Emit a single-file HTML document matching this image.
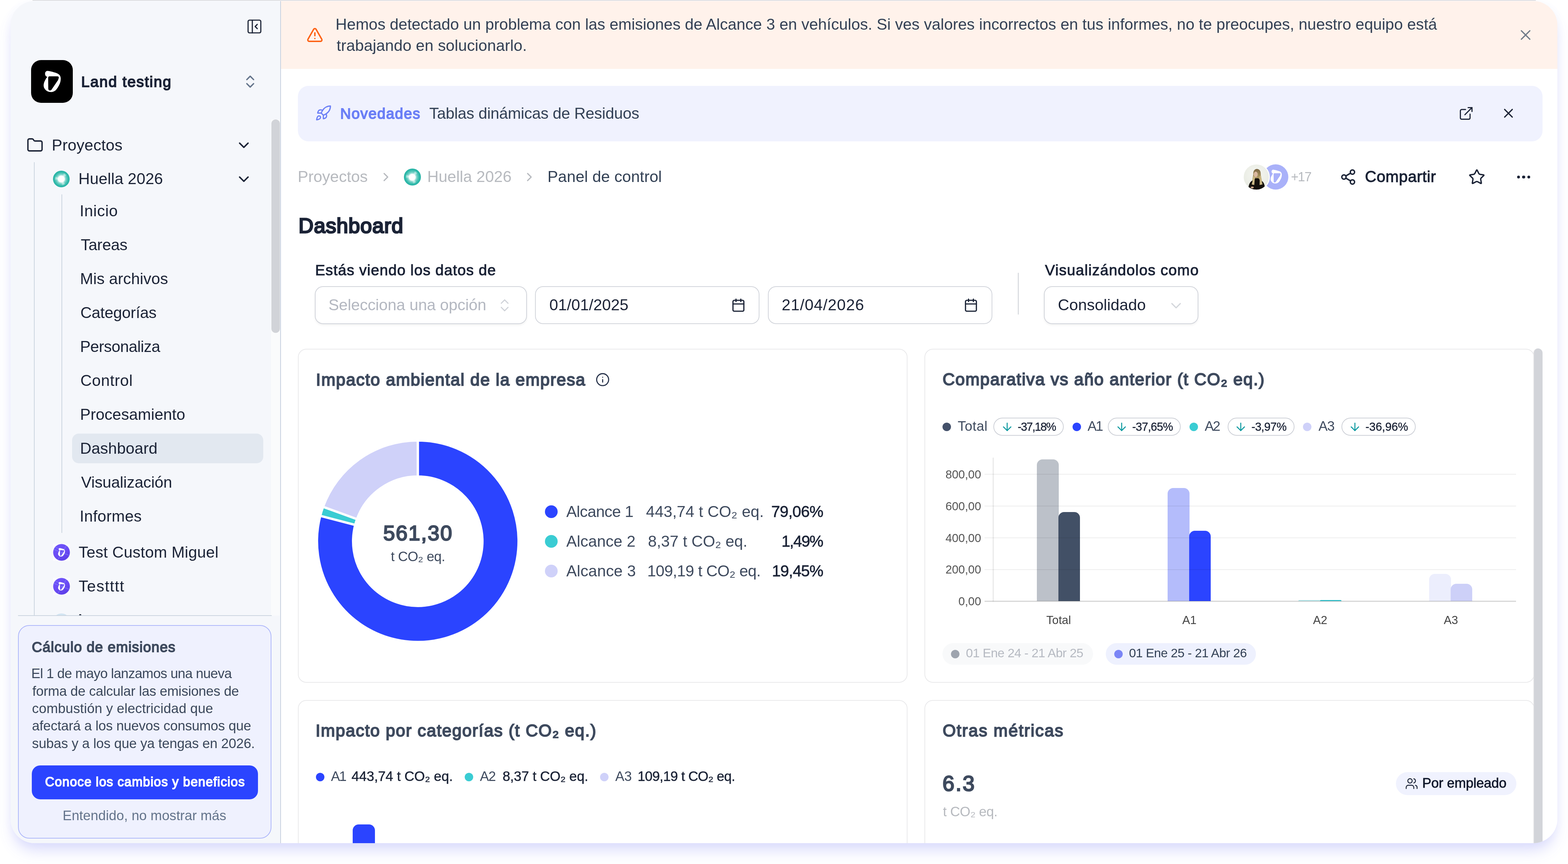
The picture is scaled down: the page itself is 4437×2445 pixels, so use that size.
<!DOCTYPE html>
<html lang="es"><head><meta charset="utf-8"><title>Dashboard</title><style>
html,body{margin:0;padding:0;background:#fff}
body{width:4437px;height:2445px;position:relative;overflow:hidden;font-family:"Liberation Sans",Arial,sans-serif}
.frame{position:absolute;left:30px;top:2.5px;width:4377px;height:2383px;border-radius:68px;overflow:hidden;background:#fff;box-shadow:0 28px 42px -8px rgba(99,102,241,0.23), 0 2px 26px rgba(99,102,241,0.035)}
.in{position:absolute;left:-30px;top:-2.5px;width:4437px;height:2445px;will-change:transform}
.b{position:absolute;box-sizing:border-box}
.i{position:absolute;display:block;overflow:visible}
.t{position:absolute;white-space:nowrap;line-height:1}
</style></head>
<body>
<div style="position:absolute;left:92px;top:0;width:4254px;height:2px;background:#dcdddd"></div>
<div class="frame"><div class="in">
<div class="b" style="left:30px;top:2px;width:765.2px;height:2384px;background:#f5f7fb;border-right:2.8px solid #c4cfde"></div>
<div class="b" style="left:767px;top:338.4px;width:25.4px;height:1403.5px;background:#fafbfc"></div>
<svg class="i" style="left:696px;top:51px" width="48" height="48" viewBox="0 0 24 24" fill="none" stroke="#1b2336" stroke-width="1.6" stroke-linecap="round" stroke-linejoin="round" ><rect width="18" height="18" x="3" y="3" rx="2"/><path d="M9 3v18"/><path d="m16 15-3-3 3-3"/></svg>
<div class="b" style="left:88px;top:170px;width:118px;height:121px;background:#000;border-radius:28px"></div>
<svg class="i" style="left:88px;top:170px" width="118" height="121" viewBox="0 0 118 121"><path d="M45.9 30.6 C50 30.6 64 34 72.5 37 C80 40 84.5 45 83.8 54 C83.5 62 81 68 78.4 72.5 C75 79 72 83 69.5 85.5 C65 89 61 90.4 56.7 90.4 C50 90.4 44 88 40.9 84.3 C37 80 35 76 35.5 70 C36 65 37.5 61 39.5 57.5 C41 54 43.5 50.5 45.8 47.5 C43 46.5 40.5 45 40 42 C39 38 39.5 35 41.5 33 C42.8 31.5 44 30.6 45.9 30.6 Z M51.8 46 L74.5 46 C77.5 46 79 48 78 51 C77.5 53 77 55 76 57 L59 82 C57.5 84.5 56 86 53.5 86 C50.5 86 48.8 84 48.6 81 L48.3 51 C48.3 48 49.5 46 51.8 46 Z" fill="#fff" fill-rule="evenodd"/></svg>
<svg class="i" style="left:685px;top:208px" width="46" height="46" viewBox="0 0 24 24" fill="none" stroke="#64748b" stroke-width="2" stroke-linecap="round" stroke-linejoin="round" ><path d="m7 15 5 5 5-5"/><path d="m7 9 5-5 5 5"/></svg>
<div class="b" style="left:768.1px;top:338.4px;width:23.8px;height:604px;background:#d1d3d8;border-radius:12px"></div>
<svg class="i" style="left:75px;top:387px" width="48" height="48" viewBox="0 0 24 24" fill="none" stroke="#1b2336" stroke-width="1.9" stroke-linecap="round" stroke-linejoin="round" ><path d="M20 20a2 2 0 0 0 2-2V8a2 2 0 0 0-2-2h-7.9a2 2 0 0 1-1.69-.9L9.6 3.9A2 2 0 0 0 7.93 3H4a2 2 0 0 0-2 2v13a2 2 0 0 0 2 2Z"/></svg>
<svg class="i" style="left:666px;top:387px" width="48" height="48" viewBox="0 0 24 24" fill="none" stroke="#1b2336" stroke-width="2" stroke-linecap="round" stroke-linejoin="round" ><path d="m6 9 6 6 6-6"/></svg>
<div class="b" style="left:96px;top:459px;width:2px;height:1284px;background:#c9d3de"></div>
<div class="b" style="left:150.3px;top:483px;width:47.2px;height:47.2px;border-radius:50%;background:radial-gradient(circle,#6fd0c4 0,#3dbfb0 50%,#1fb0a2 74%,#25b4a6 100%)"><div style="position:absolute;left:6.1px;top:6.1px;width:34.9px;height:34.9px;border-radius:50%;background:conic-gradient(from 25deg,rgba(255,255,255,.55) 0 8%,rgba(255,255,255,.12) 8% 33%,rgba(255,255,255,.55) 33% 41%,rgba(255,255,255,.12) 41% 66%,rgba(255,255,255,.55) 66% 74%,rgba(255,255,255,.12) 74% 100%);filter:blur(1.2px)"></div><div style="position:absolute;left:14.2px;top:14.2px;width:18.9px;height:18.9px;border-radius:50%;background:#fff;box-shadow:0 0 5px 2px rgba(255,255,255,.85)"></div></div>
<svg class="i" style="left:666px;top:483px" width="48" height="48" viewBox="0 0 24 24" fill="none" stroke="#1b2336" stroke-width="2" stroke-linecap="round" stroke-linejoin="round" ><path d="m6 9 6 6 6-6"/></svg>
<div class="b" style="left:174px;top:550px;width:2px;height:958px;background:#c9d3de"></div>
<div class="b" style="left:204px;top:1227px;width:540.5px;height:83.5px;background:#e2e8f0;border-radius:19px"></div>
<svg class="i" style="left:150px;top:1538.6px" width="48.2" height="48.2" viewBox="0 0 48 48"><defs><linearGradient id="pg1538" x1="0.2" y1="0" x2="0.8" y2="1"><stop offset="0" stop-color="#6f55fb"/><stop offset=".55" stop-color="#6a4af3"/><stop offset="1" stop-color="#5a3de6"/></linearGradient><clipPath id="pg1538c"><circle cx="24" cy="24" r="23.6"/></clipPath></defs><rect width="48" height="48" fill="#fbfbfe"/><circle cx="24" cy="24" r="23.6" fill="url(#pg1538)"/><g clip-path="url(#pg1538c)" stroke="#9fd0ff" stroke-opacity=".45" stroke-width="1.1" fill="none"><path d="M-2 14 L50 34"/><path d="M10 50 L42 -2"/><path d="M4 8 L30 20"/></g><g transform="translate(0.2,-0.4) scale(0.40)"><path d="M45.9 30.6 C50 30.6 64 34 72.5 37 C80 40 84.5 45 83.8 54 C83.5 62 81 68 78.4 72.5 C75 79 72 83 69.5 85.5 C65 89 61 90.4 56.7 90.4 C50 90.4 44 88 40.9 84.3 C37 80 35 76 35.5 70 C36 65 37.5 61 39.5 57.5 C41 54 43.5 50.5 45.8 47.5 C43 46.5 40.5 45 40 42 C39 38 39.5 35 41.5 33 C42.8 31.5 44 30.6 45.9 30.6 Z M51.8 46 L74.5 46 C77.5 46 79 48 78 51 C77.5 53 77 55 76 57 L59 82 C57.5 84.5 56 86 53.5 86 C50.5 86 48.8 84 48.6 81 L48.3 51 C48.3 48 49.5 46 51.8 46 Z" fill="#fff" fill-rule="evenodd"/></g></svg>
<svg class="i" style="left:150px;top:1634.8px" width="48.2" height="48.2" viewBox="0 0 48 48"><defs><linearGradient id="pg1634" x1="0.2" y1="0" x2="0.8" y2="1"><stop offset="0" stop-color="#6f55fb"/><stop offset=".55" stop-color="#6a4af3"/><stop offset="1" stop-color="#5a3de6"/></linearGradient><clipPath id="pg1634c"><circle cx="24" cy="24" r="23.6"/></clipPath></defs><rect width="48" height="48" fill="#fbfbfe"/><circle cx="24" cy="24" r="23.6" fill="url(#pg1634)"/><g clip-path="url(#pg1634c)" stroke="#9fd0ff" stroke-opacity=".45" stroke-width="1.1" fill="none"><path d="M-2 14 L50 34"/><path d="M10 50 L42 -2"/><path d="M4 8 L30 20"/></g><g transform="translate(0.2,-0.4) scale(0.40)"><path d="M45.9 30.6 C50 30.6 64 34 72.5 37 C80 40 84.5 45 83.8 54 C83.5 62 81 68 78.4 72.5 C75 79 72 83 69.5 85.5 C65 89 61 90.4 56.7 90.4 C50 90.4 44 88 40.9 84.3 C37 80 35 76 35.5 70 C36 65 37.5 61 39.5 57.5 C41 54 43.5 50.5 45.8 47.5 C43 46.5 40.5 45 40 42 C39 38 39.5 35 41.5 33 C42.8 31.5 44 30.6 45.9 30.6 Z M51.8 46 L74.5 46 C77.5 46 79 48 78 51 C77.5 53 77 55 76 57 L59 82 C57.5 84.5 56 86 53.5 86 C50.5 86 48.8 84 48.6 81 L48.3 51 C48.3 48 49.5 46 51.8 46 Z" fill="#fff" fill-rule="evenodd"/></g></svg>
<div class="b" style="left:150px;top:1735.6px;width:48px;height:6.6px;overflow:hidden"><div style="width:48px;height:48px;border-radius:50%;background:radial-gradient(circle at 50% 40%,#e4f0f8,#bcd6ea)"></div></div>
<div class="b" style="left:223.6px;top:1737.6px;width:6px;height:4.6px;background:#1b2336;border-radius:50% 50% 0 0"></div>
<div class="b" style="left:51px;top:1741px;width:718px;height:2px;background:#c9d3de"></div>
<div class="b" style="left:51px;top:1769px;width:717px;height:604px;background:#eff1fe;border:2px solid #aab4fa;border-radius:32px"></div>
<div class="b" style="left:89.6px;top:2166px;width:640px;height:96px;background:#2b44ff;border-radius:24px"></div>
<div class="b" style="left:795.2px;top:2px;width:3613px;height:192.8px;background:#fff2eb"></div>
<svg class="i" style="left:867px;top:75px" width="48" height="48" viewBox="0 0 24 24" fill="none" stroke="#fd6215" stroke-width="2" stroke-linecap="round" stroke-linejoin="round" ><path d="m21.73 18-8-14a2 2 0 0 0-3.48 0l-8 14A2 2 0 0 0 4 21h16a2 2 0 0 0 1.73-3"/><path d="M12 9v4"/><path d="M12 17h.01"/></svg>
<svg class="i" style="left:4292.8px;top:75.1px" width="48" height="48" viewBox="0 0 24 24" fill="none" stroke="#6f7a88" stroke-width="1.7" stroke-linecap="round" stroke-linejoin="round" ><path d="M18 6 6 18"/><path d="m6 6 12 12"/></svg>
<div class="b" style="left:843px;top:243px;width:3522px;height:157px;background:#f0f2fe;border-radius:30px"></div>
<svg class="i" style="left:891px;top:296px" width="48" height="48" viewBox="0 0 24 24" fill="none" stroke="#6b7ff6" stroke-width="1.7" stroke-linecap="round" stroke-linejoin="round" ><path d="M4.5 16.5c-1.5 1.26-2 5-2 5s3.74-.5 5-2c.71-.84.7-2.13-.09-2.91a2.18 2.18 0 0 0-2.91-.09z"/><path d="m12 15-3-3a22 22 0 0 1 2-3.95A12.88 12.88 0 0 1 22 2c0 2.72-.78 7.5-6 11a22.35 22.35 0 0 1-4 2z"/><path d="M9 12H4s.55-3.03 2-4c1.62-1.08 5 0 5 0"/><path d="M12 15v5s3.03-.55 4-2c1.08-1.62 0-5 0-5"/></svg>
<svg class="i" style="left:4127.3px;top:298.6px" width="43.8" height="43.8" viewBox="0 0 24 24" fill="none" stroke="#1b2336" stroke-width="1.75" stroke-linecap="round" stroke-linejoin="round" ><path d="M15 3h6v6"/><path d="M10 14 21 3"/><path d="M18 13v6a2 2 0 0 1-2 2H5a2 2 0 0 1-2-2V8a2 2 0 0 1 2-2h6"/></svg>
<svg class="i" style="left:4247.2px;top:299.4px" width="43" height="43" viewBox="0 0 24 24" fill="none" stroke="#1b2336" stroke-width="2" stroke-linecap="round" stroke-linejoin="round" ><path d="M18 6 6 18"/><path d="m6 6 12 12"/></svg>
<svg class="i" style="left:1071.9px;top:481.2px" width="40" height="40" viewBox="0 0 24 24" fill="none" stroke="#b7babf" stroke-width="2" stroke-linecap="round" stroke-linejoin="round" ><path d="m9 18 6-6-6-6"/></svg>
<div class="b" style="left:1143px;top:477.3px;width:47.7px;height:47.7px;border-radius:50%;background:radial-gradient(circle,#6fd0c4 0,#3dbfb0 50%,#1fb0a2 74%,#25b4a6 100%)"><div style="position:absolute;left:6.2px;top:6.2px;width:35.3px;height:35.3px;border-radius:50%;background:conic-gradient(from 25deg,rgba(255,255,255,.55) 0 8%,rgba(255,255,255,.12) 8% 33%,rgba(255,255,255,.55) 33% 41%,rgba(255,255,255,.12) 41% 66%,rgba(255,255,255,.55) 66% 74%,rgba(255,255,255,.12) 74% 100%);filter:blur(1.2px)"></div><div style="position:absolute;left:14.3px;top:14.3px;width:19.1px;height:19.1px;border-radius:50%;background:#fff;box-shadow:0 0 5px 2px rgba(255,255,255,.85)"></div></div>
<svg class="i" style="left:1478.4px;top:481.2px" width="40" height="40" viewBox="0 0 24 24" fill="none" stroke="#b7babf" stroke-width="2" stroke-linecap="round" stroke-linejoin="round" ><path d="m9 18 6-6-6-6"/></svg>
<svg class="i" style="left:3573.6px;top:465.2px" width="71.6" height="71.6" viewBox="0 0 71.6 71.6"><circle cx="35.8" cy="35.8" r="35.8" fill="#a9b1f9"/><g transform="translate(-1.7,-4.9) scale(0.655)"><path d="M45.9 30.6 C50 30.6 64 34 72.5 37 C80 40 84.5 45 83.8 54 C83.5 62 81 68 78.4 72.5 C75 79 72 83 69.5 85.5 C65 89 61 90.4 56.7 90.4 C50 90.4 44 88 40.9 84.3 C37 80 35 76 35.5 70 C36 65 37.5 61 39.5 57.5 C41 54 43.5 50.5 45.8 47.5 C43 46.5 40.5 45 40 42 C39 38 39.5 35 41.5 33 C42.8 31.5 44 30.6 45.9 30.6 Z M51.8 46 L74.5 46 C77.5 46 79 48 78 51 C77.5 53 77 55 76 57 L59 82 C57.5 84.5 56 86 53.5 86 C50.5 86 48.8 84 48.6 81 L48.3 51 C48.3 48 49.5 46 51.8 46 Z" fill="#fff" fill-rule="evenodd"/></g></svg>
<svg class="i" style="left:3514.8px;top:462.2px" width="80" height="80" viewBox="0 0 80 80"><defs><clipPath id="av"><circle cx="40" cy="39" r="35.6"/></clipPath><linearGradient id="hg" x1="0" y1="0" x2="0" y2="1"><stop offset="0" stop-color="#7a6644"/><stop offset=".45" stop-color="#a8935f"/><stop offset="1" stop-color="#d2c190"/></linearGradient><radialGradient id="bgp" cx=".5" cy=".4" r=".7"><stop offset="0" stop-color="#f6f7f2"/><stop offset="1" stop-color="#e6e9e0"/></radialGradient></defs><circle cx="40" cy="39" r="38.3" fill="#fff"/><circle cx="40" cy="39" r="35.6" fill="url(#bgp)"/><g clip-path="url(#av)"><path d="M31.5 31 C30.5 21 36 16 42 16 C49 16.5 53 22 52.6 32 L57.5 60 L49 62 L47 45 L36 45 L34 61 L26.5 59.5 Z" fill="url(#hg)"/><ellipse cx="38.4" cy="31.6" rx="5.6" ry="7.8" fill="#dab9a0"/><path d="M16.5 82 C17 61 22 50.5 32 47.8 L37.5 42.5 L46 42.5 L50.5 47.8 C60 50.5 64.8 58 65.5 82 Z" fill="#15110c"/><path d="M32 36 C30.5 46 28.5 54 27 60 L34.2 61.5 C35.2 52 35.4 45 36 40 Z" fill="#cdbb88"/><path d="M48.6 38 C49.8 46 49.6 54 49.2 61.5 L57.5 60 C55.8 50 53.8 42 52.6 34 Z" fill="#c9b682"/><ellipse cx="28.5" cy="68.5" rx="4.2" ry="2.4" fill="#d3ab8e"/></g></svg>
<svg class="i" style="left:3791px;top:477px" width="48" height="48" viewBox="0 0 24 24" fill="none" stroke="#1b2336" stroke-width="2" stroke-linecap="round" stroke-linejoin="round" ><circle cx="18" cy="5" r="3"/><circle cx="6" cy="12" r="3"/><circle cx="18" cy="19" r="3"/><path d="M8.59 13.51 15.42 17.49"/><path d="M15.41 6.51 8.59 10.49"/></svg>
<svg class="i" style="left:4155px;top:477px" width="48" height="48" viewBox="0 0 24 24" fill="none" stroke="#1b2336" stroke-width="1.9" stroke-linecap="round" stroke-linejoin="round" ><path d="M11.525 2.295a.53.53 0 0 1 .95 0l2.31 4.679a2.123 2.123 0 0 0 1.595 1.16l5.166.756a.53.53 0 0 1 .294.904l-3.736 3.638a2.123 2.123 0 0 0-.611 1.878l.882 5.14a.53.53 0 0 1-.771.56l-4.618-2.428a2.122 2.122 0 0 0-1.973 0L6.396 21.01a.53.53 0 0 1-.77-.56l.881-5.139a2.122 2.122 0 0 0-.611-1.879L2.16 9.795a.53.53 0 0 1 .294-.906l5.165-.755a2.122 2.122 0 0 0 1.597-1.16z"/></svg>
<div class="b" style="left:4292.5px;top:496.5px;width:8.5px;height:8.5px;background:#1b2336;border-radius:50%"></div>
<div class="b" style="left:4307.0px;top:496.5px;width:8.5px;height:8.5px;background:#1b2336;border-radius:50%"></div>
<div class="b" style="left:4321.5px;top:496.5px;width:8.5px;height:8.5px;background:#1b2336;border-radius:50%"></div>
<div class="b" style="left:891px;top:810.4px;width:599.6px;height:106.8px;background:#fff;border:2.5px solid #cfd2d9;border-radius:23px;box-shadow:0 3px 6px rgba(0,0,0,0.06)"></div>
<svg class="i" style="left:1405px;top:841.2px" width="46" height="46" viewBox="0 0 24 24" fill="none" stroke="#cfd2d8" stroke-width="1.6" stroke-linecap="round" stroke-linejoin="round" ><path d="m7 15 5 5 5-5"/><path d="m7 9 5-5 5 5"/></svg>
<div class="b" style="left:1514px;top:810.4px;width:635px;height:106.8px;background:#fff;border:2.5px solid #cfd2d9;border-radius:23px;"></div>
<svg class="i" style="left:2069px;top:843.3px" width="41" height="41" viewBox="0 0 24 24" fill="none" stroke="#1b2336" stroke-width="2" stroke-linecap="round" stroke-linejoin="round" ><path d="M8 2v4"/><path d="M16 2v4"/><rect width="18" height="18" x="3" y="4" rx="2"/><path d="M3 10h18"/></svg>
<div class="b" style="left:2173px;top:810.4px;width:635px;height:106.8px;background:#fff;border:2.5px solid #cfd2d9;border-radius:23px;"></div>
<svg class="i" style="left:2726.6px;top:843.3px" width="41" height="41" viewBox="0 0 24 24" fill="none" stroke="#1b2336" stroke-width="2" stroke-linecap="round" stroke-linejoin="round" ><path d="M8 2v4"/><path d="M16 2v4"/><rect width="18" height="18" x="3" y="4" rx="2"/><path d="M3 10h18"/></svg>
<div class="b" style="left:2880px;top:772px;width:3px;height:118px;background:#d9dbe0"></div>
<div class="b" style="left:2954px;top:810.4px;width:437px;height:106.8px;background:#fff;border:2.5px solid #cfd2d9;border-radius:23px;box-shadow:0 3px 6px rgba(0,0,0,0.06)"></div>
<svg class="i" style="left:3304px;top:840.5px" width="48" height="48" viewBox="0 0 24 24" fill="none" stroke="#d3d6db" stroke-width="1.6" stroke-linecap="round" stroke-linejoin="round" ><path d="m6 9 6 6 6-6"/></svg>
<div class="b" style="left:843px;top:987px;width:1725px;height:945px;background:#fff;border:2.5px solid #e8e8ea;border-radius:24px;"></div>
<div class="b" style="left:2616px;top:987px;width:1726px;height:945px;background:#fff;border:2.5px solid #e8e8ea;border-radius:24px;"></div>
<div class="b" style="left:843px;top:1981px;width:1725px;height:500px;background:#fff;border:2.5px solid #e8e8ea;border-radius:24px;"></div>
<div class="b" style="left:2616px;top:1981px;width:1726px;height:500px;background:#fff;border:2.5px solid #e8e8ea;border-radius:24px;"></div>
<svg class="i" style="left:1684.6px;top:1053.5px" width="40.7" height="40.7" viewBox="0 0 24 24" fill="none" stroke="#27324a" stroke-width="1.8" stroke-linecap="round" stroke-linejoin="round" ><circle cx="12" cy="12" r="10"/><path d="M12 16v-4"/><path d="M12 8h.01"/></svg>
<svg class="i" style="left:0;top:0" width="4437" height="2445" viewBox="0 0 4437 2445"><path d="M1182.20 1246.40 A285.2 285.2 0 1 1 906.23 1459.63 L1005.12 1485.42 A183 183 0 1 0 1182.20 1348.60 Z" fill="#2b44ff" stroke="#fff" stroke-width="6.5" stroke-linejoin="miter"/><path d="M906.23 1459.63 A285.2 285.2 0 0 1 914.17 1434.15 L1010.21 1469.07 A183 183 0 0 0 1005.12 1485.42 Z" fill="#3accd3" stroke="#fff" stroke-width="6.5" stroke-linejoin="miter"/><path d="M914.17 1434.15 A285.2 285.2 0 0 1 1182.20 1246.40 L1182.20 1348.60 A183 183 0 0 0 1010.21 1469.07 Z" fill="#cfd1f9" stroke="#fff" stroke-width="6.5" stroke-linejoin="miter"/></svg>
<div class="b" style="left:1542px;top:1429.9px;width:36px;height:36px;background:#2b44ff;border-radius:50%"></div>
<div class="b" style="left:1542px;top:1513.9px;width:36px;height:36px;background:#3accd3;border-radius:50%"></div>
<div class="b" style="left:1542px;top:1597.9px;width:36px;height:36px;background:#cfd1f9;border-radius:50%"></div>
<div class="b" style="left:2667px;top:1195.5px;width:24px;height:24px;background:#44516a;border-radius:50%"></div>
<div class="b" style="left:2811px;top:1182px;width:199px;height:51px;border:2.5px solid #cbced5;border-radius:26px;background:#fff"></div>
<svg class="i" style="left:2831.5px;top:1190px" width="36" height="36" viewBox="0 0 24 24" fill="none" stroke="#0e9aa0" stroke-width="1.9" stroke-linecap="round" stroke-linejoin="round" ><path d="M12 5v14"/><path d="m19 12-7 7-7-7"/></svg>
<div class="b" style="left:3034.5px;top:1195.5px;width:24px;height:24px;background:#2b44ff;border-radius:50%"></div>
<div class="b" style="left:3135px;top:1182px;width:206px;height:51px;border:2.5px solid #cbced5;border-radius:26px;background:#fff"></div>
<svg class="i" style="left:3155.5px;top:1190px" width="36" height="36" viewBox="0 0 24 24" fill="none" stroke="#0e9aa0" stroke-width="1.9" stroke-linecap="round" stroke-linejoin="round" ><path d="M12 5v14"/><path d="m19 12-7 7-7-7"/></svg>
<div class="b" style="left:3365.5px;top:1195.5px;width:24px;height:24px;background:#3accd3;border-radius:50%"></div>
<div class="b" style="left:3473.5px;top:1182px;width:189px;height:51px;border:2.5px solid #cbced5;border-radius:26px;background:#fff"></div>
<svg class="i" style="left:3493px;top:1190px" width="36" height="36" viewBox="0 0 24 24" fill="none" stroke="#0e9aa0" stroke-width="1.9" stroke-linecap="round" stroke-linejoin="round" ><path d="M12 5v14"/><path d="m19 12-7 7-7-7"/></svg>
<div class="b" style="left:3687px;top:1195.5px;width:24px;height:24px;background:#cfd1f9;border-radius:50%"></div>
<div class="b" style="left:3795.5px;top:1182px;width:210px;height:51px;border:2.5px solid #cbced5;border-radius:26px;background:#fff"></div>
<svg class="i" style="left:3815.5px;top:1190px" width="36" height="36" viewBox="0 0 24 24" fill="none" stroke="#0e9aa0" stroke-width="1.9" stroke-linecap="round" stroke-linejoin="round" ><path d="M12 5v14"/><path d="m19 12-7 7-7-7"/></svg>
<div class="b" style="left:2934px;top:1299.645px;width:61.5px;height:401.855px;background:#bcc1c9;border-radius:16px 16px 0 0"></div>
<div class="b" style="left:2994.5px;top:1449.162px;width:61.5px;height:252.338px;background:#425066;border-radius:16px 16px 0 0"></div>
<div class="b" style="left:3304px;top:1380.914px;width:61.5px;height:320.586px;background:#b4bcfb;border-radius:16px 16px 0 0"></div>
<div class="b" style="left:3364.5px;top:1501.695px;width:61.5px;height:199.805px;background:#2b44ff;border-radius:16px 16px 0 0"></div>
<div class="b" style="left:3674px;top:1697.5488px;width:61.5px;height:3.9512000000000005px;background:#b5e8ec;border-radius:3.9512000000000005px 3.9512000000000005px 0 0"></div>
<div class="b" style="left:3734.5px;top:1697.7284px;width:61.5px;height:3.7716000000000003px;background:#2ec4cf;border-radius:3.7716000000000003px 3.7716000000000003px 0 0"></div>
<div class="b" style="left:4044px;top:1623.5985px;width:61.5px;height:77.9015px;background:#eceefd;border-radius:16px 16px 0 0"></div>
<div class="b" style="left:4104.5px;top:1652.11px;width:61.5px;height:49.39px;background:#cdd0f8;border-radius:16px 16px 0 0"></div>
<div class="b" style="left:2786px;top:1700.3px;width:1504px;height:2.4px;background:rgba(0,0,0,0.17)"></div>
<div class="b" style="left:2786px;top:1610.5px;width:1504px;height:2.4px;background:rgba(0,0,0,0.075)"></div>
<div class="b" style="left:2786px;top:1520.7px;width:1504px;height:2.4px;background:rgba(0,0,0,0.075)"></div>
<div class="b" style="left:2786px;top:1430.8999999999999px;width:1504px;height:2.4px;background:rgba(0,0,0,0.075)"></div>
<div class="b" style="left:2786px;top:1341.1px;width:1504px;height:2.4px;background:rgba(0,0,0,0.075)"></div>
<div class="b" style="left:2809.3px;top:1295px;width:2.4px;height:407px;background:rgba(0,0,0,0.09)"></div>
<div class="b" style="left:2667px;top:1820px;width:426px;height:61px;background:#f8f9fa;border-radius:31px"></div>
<div class="b" style="left:2691px;top:1838.5px;width:24px;height:24px;background:#9ea4ae;border-radius:50%"></div>
<div class="b" style="left:3129px;top:1820px;width:425px;height:61px;background:#eef1fe;border-radius:31px"></div>
<div class="b" style="left:3153px;top:1838.5px;width:24px;height:24px;background:#7a85f6;border-radius:50%"></div>
<div class="b" style="left:894px;top:2187.0px;width:24px;height:24px;background:#2b44ff;border-radius:50%"></div>
<div class="b" style="left:1315px;top:2187.0px;width:24px;height:24px;background:#3accd3;border-radius:50%"></div>
<div class="b" style="left:1698px;top:2187.0px;width:24px;height:24px;background:#cfd1f9;border-radius:50%"></div>
<div class="b" style="left:998px;top:2333px;width:62.5px;height:120px;background:#2b44ff;border-radius:17px 17px 0 0"></div>
<div class="b" style="left:3949.5px;top:2184.5px;width:341px;height:65.5px;background:#f0f2fe;border-radius:33px"></div>
<svg class="i" style="left:3976px;top:2199px" width="37" height="37" viewBox="0 0 24 24" fill="none" stroke="#1b2336" stroke-width="1.7" stroke-linecap="round" stroke-linejoin="round" ><path d="M16 21v-2a4 4 0 0 0-4-4H6a4 4 0 0 0-4 4v2"/><circle cx="9" cy="7" r="4"/><path d="M22 21v-2a4 4 0 0 0-3-3.87"/><path d="M16 3.13a4 4 0 0 1 0 7.75"/></svg>
<div class="b" style="left:4338.6px;top:986px;width:26.4px;height:1420px;background:#d2d4d9;border-radius:13px 13px 0 0;border-left:2.5px solid #e6e6e8"></div>
<span class="t" style="left:229.8px;top:210.6px;font-size:42.3px;color:#1b2336;letter-spacing:2.17px;-webkit-text-stroke:2.16px #1b2336;">Land testing</span>
<span class="t" style="left:146.4px;top:388.5px;font-size:44.6px;color:#1b2336;letter-spacing:0.25px;">Proyectos</span>
<span class="t" style="left:222.0px;top:483.9px;font-size:44.6px;color:#1b2336;letter-spacing:0.11px;">Huella 2026</span>
<span class="t" style="left:225.4px;top:574.5px;font-size:44.6px;color:#1b2336;letter-spacing:0.72px;">Inicio</span>
<span class="t" style="left:228.4px;top:670.5px;font-size:44.6px;color:#1b2336;letter-spacing:-0.31px;">Tareas</span>
<span class="t" style="left:226.4px;top:766.5px;font-size:44.6px;color:#1b2336;letter-spacing:0.12px;">Mis archivos</span>
<span class="t" style="left:227.4px;top:862.5px;font-size:44.6px;color:#1b2336;letter-spacing:-0.27px;">Categorías</span>
<span class="t" style="left:226.4px;top:958.5px;font-size:44.6px;color:#1b2336;letter-spacing:-0.58px;">Personaliza</span>
<span class="t" style="left:227.4px;top:1054.5px;font-size:44.6px;color:#1b2336;letter-spacing:0.68px;">Control</span>
<span class="t" style="left:226.4px;top:1150.5px;font-size:44.6px;color:#1b2336;letter-spacing:0.01px;">Procesamiento</span>
<span class="t" style="left:226.4px;top:1246.5px;font-size:44.6px;color:#1b2336;letter-spacing:0.11px;">Dashboard</span>
<span class="t" style="left:229.4px;top:1342.5px;font-size:44.6px;color:#1b2336;letter-spacing:-0.16px;">Visualización</span>
<span class="t" style="left:225.4px;top:1438.5px;font-size:44.6px;color:#1b2336;letter-spacing:0.29px;">Informes</span>
<span class="t" style="left:222.4px;top:1540.7px;font-size:44.6px;color:#1b2336;letter-spacing:0.24px;">Test Custom Miguel</span>
<span class="t" style="left:222.4px;top:1636.5px;font-size:44.6px;color:#1b2336;letter-spacing:1.64px;">Testttt</span>
<span class="t" style="left:89.9px;top:1811.9px;font-size:40.3px;color:#3e4a5e;letter-spacing:1.21px;-webkit-text-stroke:2.06px #3e4a5e;">Cálculo de emisiones</span>
<span class="t" style="left:88.6px;top:1887.3px;font-size:38.6px;color:#3b485b;letter-spacing:-0.81px;">El 1 de mayo lanzamos una nueva</span>
<span class="t" style="left:91.6px;top:1936.6px;font-size:38.6px;color:#3b485b;letter-spacing:-0.28px;">forma de calcular las emisiones de</span>
<span class="t" style="left:90.6px;top:1986.0px;font-size:38.6px;color:#3b485b;letter-spacing:0.15px;">combustión y electricidad que</span>
<span class="t" style="left:90.6px;top:2035.3px;font-size:38.6px;color:#3b485b;letter-spacing:-0.25px;">afectará a los nuevos consumos que</span>
<span class="t" style="left:90.6px;top:2084.7px;font-size:38.6px;color:#3b485b;letter-spacing:-0.24px;">subas y a los que ya tengas en 2026.</span>
<span class="t" style="left:127.5px;top:2194.7px;font-size:36.2px;color:#fff;letter-spacing:1.26px;-webkit-text-stroke:1.85px #fff;">Conoce los cambios y beneficios</span>
<span class="t" style="left:177.2px;top:2289.2px;font-size:38.6px;color:#64748b;">Entendido, no mostrar más</span>
<span class="t" style="left:949.5px;top:46.6px;font-size:44.6px;color:#334155;letter-spacing:-0.01px;">Hemos detectado un problema con las emisiones de Alcance 3 en vehículos. Si ves valores incorrectos en tus informes, no te preocupes, nuestro equipo está</span>
<span class="t" style="left:952.5px;top:106.7px;font-size:44.6px;color:#334155;letter-spacing:0.11px;">trabajando en solucionarlo.</span>
<span class="t" style="left:962.8px;top:300.9px;font-size:41.8px;color:#6b7ff6;letter-spacing:1.79px;-webkit-text-stroke:2.13px #6b7ff6;">Novedades</span>
<span class="t" style="left:1214.7px;top:298.5px;font-size:44.6px;color:#334155;letter-spacing:-0.30px;">Tablas dinámicas de Residuos</span>
<span class="t" style="left:842.4px;top:477.6px;font-size:44.6px;color:#b7babf;">Proyectos</span>
<span class="t" style="left:1208.9px;top:477.6px;font-size:44.6px;color:#b7babf;letter-spacing:0.06px;">Huella 2026</span>
<span class="t" style="left:1549.3px;top:477.9px;font-size:44.6px;color:#334155;letter-spacing:0.08px;">Panel de control</span>
<span class="t" style="left:3652.9px;top:481.9px;font-size:37px;color:#b7babf;letter-spacing:-1.94px;">+17</span>
<span class="t" style="left:3862.6px;top:478.0px;font-size:44.6px;color:#1b2336;font-weight:500;letter-spacing:0.60px;-webkit-text-stroke:1.3px #1b2336;">Compartir</span>
<span class="t" style="left:844.7px;top:610.3px;font-size:58.7px;color:#1b2336;letter-spacing:1.10px;-webkit-text-stroke:3.64px #1b2336;">Dashboard</span>
<span class="t" style="left:891.7px;top:744.2px;font-size:42.3px;color:#1b2336;letter-spacing:1.21px;-webkit-text-stroke:1.2px #1b2336;">Estás viendo los datos de</span>
<span class="t" style="left:929.4px;top:840.9px;font-size:44.6px;color:#b4b8c1;letter-spacing:-0.11px;">Selecciona una opción</span>
<span class="t" style="left:1554.5px;top:840.8px;font-size:44.6px;color:#1b2336;letter-spacing:0.07px;">01/01/2025</span>
<span class="t" style="left:2212.0px;top:840.8px;font-size:44.6px;color:#1b2336;letter-spacing:1.07px;">21/04/2026</span>
<span class="t" style="left:2957.1px;top:744.2px;font-size:42.3px;color:#1b2336;letter-spacing:1.37px;-webkit-text-stroke:1.2px #1b2336;">Visualizándolos como</span>
<span class="t" style="left:2993.5px;top:840.8px;font-size:44.6px;color:#1b2336;letter-spacing:0.09px;">Consolidado</span>
<span class="t" style="left:894.1px;top:1050.6px;font-size:47.8px;color:#3e4a5e;letter-spacing:1.83px;-webkit-text-stroke:2.44px #3e4a5e;">Impacto ambiental de la empresa</span>
<span class="t" style="left:1084.5px;top:1479.2px;font-size:59.6px;color:#3e4a5e;letter-spacing:2.45px;-webkit-text-stroke:3.04px #3e4a5e;">561,30</span>
<span class="t" style="left:1105.9px;top:1556.2px;font-size:38.6px;color:#3e4a5e;letter-spacing:-0.58px;">t CO₂ eq.</span>
<span class="t" style="left:1602.5px;top:1425.7px;font-size:44.6px;color:#3e4a5e;letter-spacing:-0.69px;">Alcance 1</span>
<span class="t" style="left:1828.0px;top:1425.7px;font-size:44.6px;color:#3e4a5e;letter-spacing:0.08px;">443,74 t CO₂ eq.</span>
<span class="t" style="left:2182.4px;top:1425.7px;font-size:44.6px;color:#1b2336;letter-spacing:-0.68px;-webkit-text-stroke:0.8px #1b2336;">79,06%</span>
<span class="t" style="left:1602.5px;top:1509.7px;font-size:44.6px;color:#3e4a5e;">Alcance 2</span>
<span class="t" style="left:1833.5px;top:1509.7px;font-size:44.6px;color:#3e4a5e;letter-spacing:-0.09px;">8,37 t CO₂ eq.</span>
<span class="t" style="left:2211.4px;top:1509.7px;font-size:44.6px;color:#1b2336;letter-spacing:-1.90px;-webkit-text-stroke:0.8px #1b2336;">1,49%</span>
<span class="t" style="left:1602.5px;top:1593.7px;font-size:44.6px;color:#3e4a5e;letter-spacing:0.12px;">Alcance 3</span>
<span class="t" style="left:1831.5px;top:1593.7px;font-size:44.6px;color:#3e4a5e;letter-spacing:-0.72px;">109,19 t CO₂ eq.</span>
<span class="t" style="left:2184.4px;top:1593.7px;font-size:44.6px;color:#1b2336;letter-spacing:-1.08px;-webkit-text-stroke:0.8px #1b2336;">19,45%</span>
<span class="t" style="left:2667.2px;top:1050.1px;font-size:47.8px;color:#3e4a5e;letter-spacing:1.80px;-webkit-text-stroke:2.44px #3e4a5e;">Comparativa vs año anterior (t CO₂ eq.)</span>
<span class="t" style="left:2710.0px;top:1186.9px;font-size:38.6px;color:#3e4a5e;letter-spacing:0.65px;">Total</span>
<span class="t" style="left:2879.8px;top:1191.6px;font-size:32.4px;color:#1b2336;letter-spacing:-1.89px;-webkit-text-stroke:0.5px #1b2336;">-37,18%</span>
<span class="t" style="left:3077.5px;top:1186.9px;font-size:38.6px;color:#3e4a5e;letter-spacing:-2.70px;">A1</span>
<span class="t" style="left:3203.8px;top:1191.6px;font-size:32.4px;color:#1b2336;letter-spacing:-0.81px;-webkit-text-stroke:0.5px #1b2336;">-37,65%</span>
<span class="t" style="left:3409.0px;top:1186.9px;font-size:38.6px;color:#3e4a5e;letter-spacing:-2.70px;">A2</span>
<span class="t" style="left:3541.2px;top:1191.6px;font-size:32.4px;color:#1b2336;letter-spacing:-0.57px;-webkit-text-stroke:0.5px #1b2336;">-3,97%</span>
<span class="t" style="left:3731.0px;top:1186.9px;font-size:38.6px;color:#3e4a5e;letter-spacing:-1.23px;">A3</span>
<span class="t" style="left:3863.8px;top:1191.6px;font-size:32.4px;color:#1b2336;letter-spacing:0.03px;-webkit-text-stroke:0.5px #1b2336;">-36,96%</span>
<span class="t" style="left:2712.1px;top:1685.1px;font-size:33px;color:#555;">0,00</span>
<span class="t" style="left:2675.4px;top:1595.3px;font-size:33px;color:#555;">200,00</span>
<span class="t" style="left:2675.4px;top:1505.5px;font-size:33px;color:#555;">400,00</span>
<span class="t" style="left:2675.4px;top:1415.7px;font-size:33px;color:#555;">600,00</span>
<span class="t" style="left:2675.4px;top:1325.9px;font-size:33px;color:#555;">800,00</span>
<span class="t" style="left:2960.8px;top:1737.6px;font-size:33px;color:#444;">Total</span>
<span class="t" style="left:3345.5px;top:1737.6px;font-size:33px;color:#444;">A1</span>
<span class="t" style="left:3715.5px;top:1737.6px;font-size:33px;color:#444;">A2</span>
<span class="t" style="left:4085.5px;top:1737.6px;font-size:33px;color:#444;">A3</span>
<span class="t" style="left:2733.3px;top:1830.9px;font-size:35.6px;color:#b6bac2;letter-spacing:-0.68px;">01 Ene 24 - 21 Abr 25</span>
<span class="t" style="left:3194.8px;top:1830.9px;font-size:35.6px;color:#334155;letter-spacing:-0.62px;">01 Ene 25 - 21 Abr 26</span>
<span class="t" style="left:892.9px;top:2044.2px;font-size:47.8px;color:#3e4a5e;letter-spacing:1.92px;-webkit-text-stroke:2.44px #3e4a5e;">Impacto por categorías (t CO₂ eq.)</span>
<span class="t" style="left:936.5px;top:2178.4px;font-size:38.6px;color:#3e4a5e;letter-spacing:-2.70px;">A1</span>
<span class="t" style="left:994.8px;top:2178.4px;font-size:38.6px;color:#1b2336;letter-spacing:-0.05px;-webkit-text-stroke:0.6px #1b2336;">443,74 t CO₂ eq.</span>
<span class="t" style="left:1358.0px;top:2178.4px;font-size:38.6px;color:#3e4a5e;letter-spacing:-1.73px;">A2</span>
<span class="t" style="left:1422.3px;top:2178.4px;font-size:38.6px;color:#1b2336;letter-spacing:-0.18px;-webkit-text-stroke:0.6px #1b2336;">8,37 t CO₂ eq.</span>
<span class="t" style="left:1741.0px;top:2178.4px;font-size:38.6px;color:#3e4a5e;letter-spacing:-0.23px;">A3</span>
<span class="t" style="left:1804.3px;top:2178.4px;font-size:38.6px;color:#1b2336;letter-spacing:-0.75px;-webkit-text-stroke:0.6px #1b2336;">109,19 t CO₂ eq.</span>
<span class="t" style="left:2667.5px;top:2043.6px;font-size:47.8px;color:#3e4a5e;letter-spacing:2.33px;-webkit-text-stroke:2.44px #3e4a5e;">Otras métricas</span>
<span class="t" style="left:2667.0px;top:2187.3px;font-size:60.5px;color:#3e4a5e;letter-spacing:3.23px;-webkit-text-stroke:3.09px #3e4a5e;">6.3</span>
<span class="t" style="left:2668.3px;top:2278.0px;font-size:38.6px;color:#b7babf;letter-spacing:-0.49px;">t CO₂ eq.</span>
<span class="t" style="left:4024.4px;top:2197.4px;font-size:38.6px;color:#0f172a;letter-spacing:-0.14px;-webkit-text-stroke:0.8px #0f172a;">Por empleado</span>
</div></div>
</body></html>
